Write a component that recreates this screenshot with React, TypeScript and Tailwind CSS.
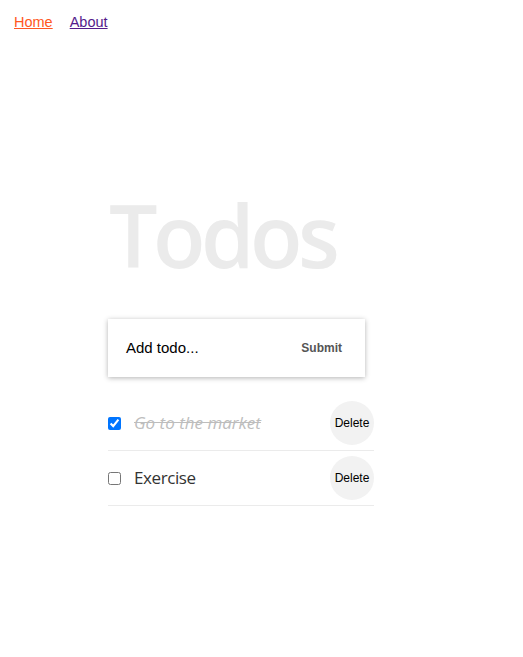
import { useState } from "react";

type Todo = { id: number; text: string; done: boolean };

export default function App() {
  const [todos, setTodos] = useState<Todo[]>([
    { id: 1, text: "Go to the market", done: true },
    { id: 2, text: "Exercise", done: false },
  ]);

  return (
    <div className="min-h-[657px] bg-white">
      {/* Nav */}
      <nav className="flex gap-[17px] px-[14px] pt-[12px] text-[14.5px] leading-[20px] font-['Liberation_Sans',Arial,sans-serif]">
        <a href="#" className="text-[#ff5722] underline">Home</a>
        <a href="#" className="text-[#551a8b] underline">About</a>
      </nav>

      <div className="ml-[108px] w-[266px]">
        <h1 className="mt-[153px] ml-[1px] text-[86px] leading-[100px] text-[#ebebeb] font-['Open_Sans','Noto_Sans',sans-serif] font-semibold tracking-[-4.5px]">
          Todos
        </h1>

        {/* Add form */}
        <div className="mt-[34px] w-[257px] h-[58px] flex items-center justify-between pl-[18px] pr-[23px] bg-white shadow-[0_1px_5px_rgba(0,0,0,0.3)] font-['Liberation_Sans',Arial,sans-serif]">
          <span className="text-[15px] text-black">Add todo...</span>
          <button className="text-[12px] font-bold text-[#555]">Submit</button>
        </div>

        {/* List */}
        <ul className="mt-[19px]">
          {todos.map(t => (
            <li key={t.id} className="flex items-center h-[55px] border-b border-[#ebebeb]">
              <input
                type="checkbox"
                checked={t.done}
                onChange={() =>
                  setTodos(prev => prev.map(p => (p.id === t.id ? { ...p, done: !p.done } : p)))
                }
                className="w-[13px] h-[13px] m-0"
              />
              <span
                className={
                  "ml-[13px] flex-1 text-[17px] font-['Open_Sans','Noto_Sans',sans-serif] " +
                  (t.done ? "italic line-through text-[#bdbdbd]" : "text-[#333] tracking-[-0.4px]")
                }
              >
                {t.text}
              </span>
              <button className="w-[44px] h-[44px] rounded-full bg-[#f2f2f2] text-[12px] text-black font-['Liberation_Sans',Arial,sans-serif]">
                Delete
              </button>
            </li>
          ))}
        </ul>
      </div>
    </div>
  );
}
